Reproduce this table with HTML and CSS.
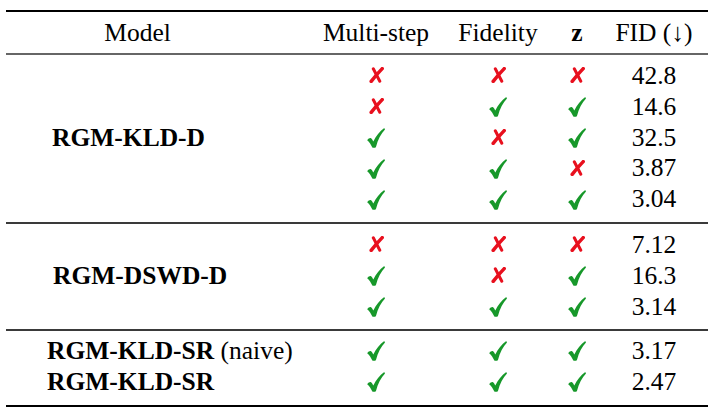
FILE: index.html
```html
<!DOCTYPE html>
<html>
<head>
<meta charset="utf-8">
<link rel="stylesheet" href="styles.css">
</head>
<body>
<svg class="defs" width="0" height="0" aria-hidden="true">
  <defs>
    <symbol id="chk" viewBox="0 0 18 20">
      <path d="M0.2,12.2 C1.3,10.6 2.9,9.8 4,10.2 C4.9,10.8 5.6,12.2 6.3,13.4 C9,8.2 12.6,3.4 17.2,0 L18,1.5 C14,5.8 10.9,11.6 8.9,19.2 C7.9,19.9 6.4,20 5.3,19.6 C4,16.6 2.5,13.8 0.2,12.2 Z" fill="#17982a"/>
    </symbol>
    <symbol id="crs" viewBox="0 0 15 16">
      <path d="M4.3,1.8 L10.8,14.2" stroke="#e8101e" stroke-width="3" stroke-linecap="round" fill="none"/>
      <path d="M13.2,1.6 Q7.5,7.5 2.2,14.4" stroke="#e8101e" stroke-width="3.5" stroke-linecap="round" fill="none"/>
    </symbol>
  </defs>
</svg>
<div class="tbl">
  <div class="row head">
    <div class="c">Model</div>
    <div class="c">Multi-step</div>
    <div class="c">Fidelity</div>
    <div class="c"><b>z</b></div>
    <div class="c">FID (↓)</div>
  </div>

  <div class="group g1">
    <div class="model span5 pad1"><b>RGM-KLD-D</b></div>
    <div class="c"><svg class="x"><use href="#crs"/></svg></div>
    <div class="c"><svg class="x"><use href="#crs"/></svg></div>
    <div class="c"><svg class="x"><use href="#crs"/></svg></div>
    <div class="c">42.8</div>

    <div class="c"><svg class="x"><use href="#crs"/></svg></div>
    <div class="c"><svg class="v"><use href="#chk"/></svg></div>
    <div class="c"><svg class="v"><use href="#chk"/></svg></div>
    <div class="c">14.6</div>

    <div class="c"><svg class="v"><use href="#chk"/></svg></div>
    <div class="c"><svg class="x"><use href="#crs"/></svg></div>
    <div class="c"><svg class="v"><use href="#chk"/></svg></div>
    <div class="c">32.5</div>

    <div class="c"><svg class="v"><use href="#chk"/></svg></div>
    <div class="c"><svg class="v"><use href="#chk"/></svg></div>
    <div class="c"><svg class="x"><use href="#crs"/></svg></div>
    <div class="c">3.87</div>

    <div class="c"><svg class="v"><use href="#chk"/></svg></div>
    <div class="c"><svg class="v"><use href="#chk"/></svg></div>
    <div class="c"><svg class="v"><use href="#chk"/></svg></div>
    <div class="c">3.04</div>
  </div>

  <div class="group g2">
    <div class="model span3 pad2"><b>RGM-DSWD-D</b></div>
    <div class="c"><svg class="x"><use href="#crs"/></svg></div>
    <div class="c"><svg class="x"><use href="#crs"/></svg></div>
    <div class="c"><svg class="x"><use href="#crs"/></svg></div>
    <div class="c">7.12</div>

    <div class="c"><svg class="v"><use href="#chk"/></svg></div>
    <div class="c"><svg class="x"><use href="#crs"/></svg></div>
    <div class="c"><svg class="v"><use href="#chk"/></svg></div>
    <div class="c">16.3</div>

    <div class="c"><svg class="v"><use href="#chk"/></svg></div>
    <div class="c"><svg class="v"><use href="#chk"/></svg></div>
    <div class="c"><svg class="v"><use href="#chk"/></svg></div>
    <div class="c">3.14</div>
  </div>

  <div class="group g3">
    <div class="model pad3"><b>RGM-KLD-SR</b>&nbsp;(naive)</div>
    <div class="c"><svg class="v"><use href="#chk"/></svg></div>
    <div class="c"><svg class="v"><use href="#chk"/></svg></div>
    <div class="c"><svg class="v"><use href="#chk"/></svg></div>
    <div class="c">3.17</div>

    <div class="model pad3"><b>RGM-KLD-SR</b></div>
    <div class="c"><svg class="v"><use href="#chk"/></svg></div>
    <div class="c"><svg class="v"><use href="#chk"/></svg></div>
    <div class="c"><svg class="v"><use href="#chk"/></svg></div>
    <div class="c">2.47</div>
  </div>
</div>
</body>
</html>
```

FILE: styles.css
```css
html, body {
  margin: 0;
  padding: 0;
  background: #ffffff;
}

body {
  font-family: "Liberation Serif", "Times New Roman", serif;
  font-size: 25.5px;
  color: #000;
}

.defs {
  position: absolute;
  width: 0;
  height: 0;
  overflow: hidden;
}

.tbl {
  margin: 10px 0 0 6px;
  width: 702px;
  border-top: 2px solid #000;
  border-bottom: 2px solid #000;
}

.row,
.group {
  display: grid;
  grid-template-columns: 263px 214px 30px 128px 26px;
  grid-auto-rows: 30.8px;
  line-height: 30.8px;
}

.head {
  grid-template-rows: 41px;
  line-height: 41px;
  border-bottom: 2px solid #666;
}

.group {
  border-bottom: 2px solid #3a3a3a;
}

.group.g3 {
  border-bottom: none;
}

.g1 { padding: 6px 0 7.5px; }
.g2 { padding: 5.5px 0 7px; }
.g3 { padding: 4.5px 0 7.4px; }

.c {
  display: flex;
  justify-content: center;
  align-items: center;
  white-space: nowrap;
}

.model {
  grid-column: 1;
  display: flex;
  align-items: center;
  white-space: nowrap;
}

.span5 { grid-row: 1 / span 5; }
.span3 { grid-row: 1 / span 3; }

.pad1 { padding-left: 46px; }
.pad2 { padding-left: 47px; }
.pad3 { padding-left: 41px; }

.v {
  width: 18px;
  height: 20px;
  flex: none;
}

.x {
  width: 15px;
  height: 16px;
  flex: none;
  margin-top: -2px;
}
```
